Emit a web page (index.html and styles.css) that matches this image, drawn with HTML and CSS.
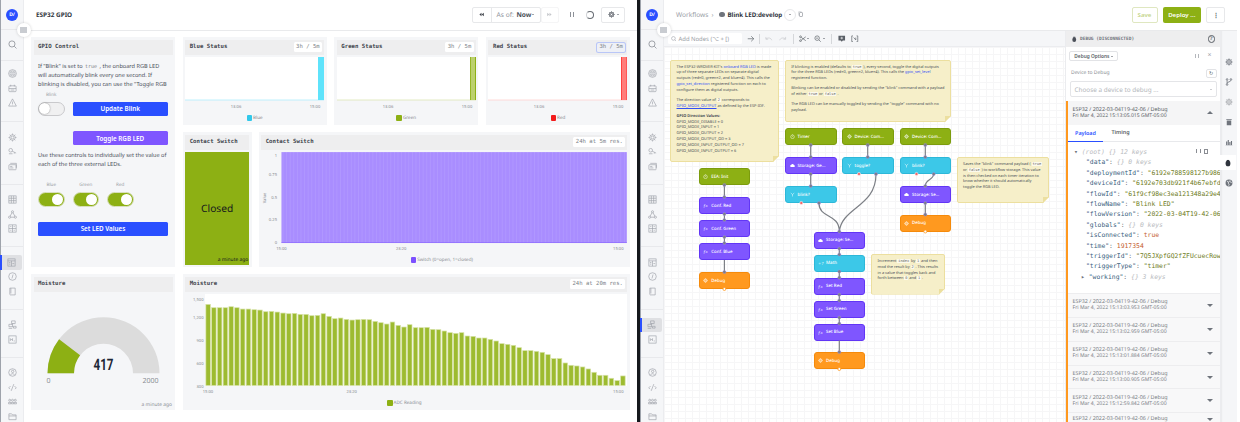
FILE: index.html
```html
<!DOCTYPE html>
<html lang="en">
<head>
    <meta charset="UTF-8">
    <title>ESP32 GPIO</title>
    <link rel="stylesheet" href="styles.css">
</head>
<body>
    <!-- shared icons -->
    <svg class="defs" width="0" height="0">
        <symbol id="i-search" viewBox="0 0 10 10"><circle cx="4.4" cy="4.4" r="3.4"/><path d="M7 7l2.4 2.4"/></symbol>
        <symbol id="i-list" viewBox="0 0 10 10"><circle cx="5" cy="5" r="4.3"/><circle cx="5" cy="5" r="2.8"/><path d="M3.4 4.2h3.2M3.4 5.8h3.2"/></symbol>
        <symbol id="i-device" viewBox="0 0 10 10"><rect x="1" y="2" width="8" height="6.5" rx="1"/><path d="M1 5h8M3 .8v2M7 .8v2M3 6.7h4"/></symbol>
        <symbol id="i-warn" viewBox="0 0 10 10"><path d="M5 1l4.3 8H.7zM5 4v2.6M5 7.4v.6"/></symbol>
        <symbol id="i-gear" viewBox="0 0 10 10"><circle cx="5" cy="5" r="3.1"/><circle cx="5" cy="5" r="1.6"/><path d="M5 .6v1.3M5 8.1v1.3M.6 5h1.3M8.1 5h1.3M1.9 1.9l.9.9M7.2 7.2l.9.9M8.1 1.9l-.9.9M2.8 7.2l-.9.9"/></symbol>
        <symbol id="i-key" viewBox="0 0 10 10"><circle cx="3" cy="3.6" r="2"/><path d="M4.6 4.6l4.4 2.2M7.4 6l-.5 1.4M1 7.5h4"/></symbol>
        <symbol id="i-card" viewBox="0 0 10 10"><rect x="1" y="3" width="8" height="5.6" rx=".6"/><path d="M2.5 1.5h6.8v5M2.4 5h2.4M2.4 6.6h3.6"/></symbol>
        <symbol id="i-table" viewBox="0 0 10 10"><rect x="1" y="1" width="8" height="8"/><path d="M1 3.6h8M1 6.3h8M3.7 1v8M6.3 1v8"/></symbol>
        <symbol id="i-tree" viewBox="0 0 10 10"><circle cx="5" cy="2" r="1.2"/><circle cx="1.8" cy="8" r="1.2"/><circle cx="8.2" cy="8" r="1.2"/><path d="M4.4 3l-2 3.9M5.6 3l2 3.9M3 8h4"/></symbol>
        <symbol id="i-qr" viewBox="0 0 10 10"><rect x="1" y="1" width="8" height="8"/><path d="M1 5h8M5 1v8M2.5 2.8h1.2M6.3 2.8h1.2M2.5 7h1.2M6.3 7h1.2"/></symbol>
        <symbol id="i-dash" viewBox="0 0 10 10"><rect x="1" y="1" width="8" height="8"/><path d="M1 3.2h8M5 3.2V9M2.2 5h1.6M2.2 6.8h1.6M6 6.2h2"/></symbol>
        <symbol id="i-info" viewBox="0 0 10 10"><circle cx="5" cy="5" r="4.2"/><path d="M5.6 2.8L4.4 7.2"/></symbol>
        <symbol id="i-book" viewBox="0 0 10 10"><path d="M2 1.2h6v7.6H2.6a.9.9 0 0 1-.6-.9zM3.2 1.2v6"/></symbol>
        <symbol id="i-flow" viewBox="0 0 10 10"><path d="M4 1h4v3H4zM1 4.8h4v2.6H1zM6 7h3v2H6zM6 4L4 4.8M5 7.2l1 .6M.7 9.3h4"/></symbol>
        <symbol id="i-chart" viewBox="0 0 10 10"><rect x="1" y="1" width="8" height="8"/><path d="M2.6 6.6V4l1.2 1.4L5 4v2.6M6.4 6.6h1.2"/></symbol>
        <symbol id="i-user" viewBox="0 0 10 10"><circle cx="5" cy="5" r="4.2"/><circle cx="5.2" cy="3.8" r="1.3"/><path d="M2.8 7.6c.3-1.6 4-1.8 4.4 0"/></symbol>
        <symbol id="i-code" viewBox="0 0 10 10"><path d="M6.5 1.2L3.5 8.8M2.8 3.4L.8 5.4l1.4 1.4M7.2 3.4l2 2-1.4 1.4"/></symbol>
        <symbol id="i-group" viewBox="0 0 10 10"><circle cx="1.9" cy="3.6" r="1.1"/><circle cx="5" cy="3.6" r="1.1"/><circle cx="8.1" cy="3.6" r="1.1"/><path d="M.6 7.6V6h2.6v1.6zM3.7 7.6V6h2.6v1.6zM6.8 7.6V6h2.6v1.6z"/></symbol>
        <symbol id="i-folder" viewBox="0 0 10 10"><path d="M1 2h3l1 1.2h4v5.3H1z"/><path d="M1 4.4h8"/></symbol>
        <symbol id="i-bug" viewBox="0 0 10 10"><ellipse class="solid" cx="5" cy="5.6" rx="3" ry="3.6"/><path class="solid" d="M3.4 1.2h3.2v1.6H3.4z"/></symbol>
        <symbol id="i-branch" viewBox="0 0 10 10"><circle cx="2.6" cy="1.8" r="1"/><circle cx="7.4" cy="1.8" r="1"/><circle cx="2.6" cy="8.2" r="1"/><path d="M2.6 2.8v4.4M7.4 2.8c0 2.4-4.8 1.6-4.8 4"/></symbol>
        <symbol id="i-trash" viewBox="0 0 10 10"><path class="solid" d="M2.2 3h5.6v6.2H2.2zM1.6 1.4h6.8v.9H1.6z"/></symbol>
        <symbol id="i-bars" viewBox="0 0 10 10"><path class="solid" d="M.8 8.6h8.4V9H.8zM1.4 4.4h1.4v4.2H1.4zM3.4 2.4h1.4v6.2H3.4zM5.4 5h1.4v3.6H5.4zM7.4 3.6h1.4v5H7.4z"/></symbol>
        <symbol id="i-globe" viewBox="0 0 10 10"><circle class="solid" cx="5" cy="5" r="4.3"/><path class="cut" d="M2.4 2.6l2 1-.4 1.6 1.2 1.2-.6 2M6.4 1.6l-.6 1.6 2.6 1.2"/></symbol>
        <symbol id="i-clock" viewBox="0 0 10 10"><circle cx="5" cy="5.6" r="3.6"/><path d="M5 5.6V3.8M5 .7v1"/></symbol>
        <symbol id="i-cloud" viewBox="0 0 10 10"><path class="solid" d="M2.6 8.2a2.2 2.2 0 0 1-.3-4.4 2.8 2.8 0 0 1 5.4.4 2 2 0 0 1-.2 4z"/></symbol>
        <symbol id="i-split" viewBox="0 0 10 10"><path d="M1.5 2l3.5 3 3.5-3M5 5v4"/></symbol>
        <symbol id="i-rewind" viewBox="0 0 10 10"><path class="solid" d="M5 1.5v7L.8 5zM9.6 1.5v7L5.4 5z"/></symbol>
        <symbol id="i-forward" viewBox="0 0 10 10"><path class="solid" d="M5 1.5v7L9.2 5zM.4 1.5v7L4.6 5z"/></symbol>
    </svg>

    <div class="screen">
        <!-- dashboard -->
        <div class="app app-left">
            <nav class="side">
                <div class="side-logo"><span class="logo">D/</span></div>
                <div class="side-sec side-sec-search"><span class="side-item"><svg class="ico ico-dark"><use href="#i-search"/></svg></span></div>
                <div class="side-sec side-sec-first">
                    <span class="side-item"><svg class="ico"><use href="#i-list"/></svg></span>
                    <span class="side-item"><svg class="ico"><use href="#i-device"/></svg></span>
                    <span class="side-item"><svg class="ico"><use href="#i-warn"/></svg></span>
                </div>
                <div class="side-sec">
                    <span class="side-item"><svg class="ico"><use href="#i-gear"/></svg></span>
                    <span class="side-item"><svg class="ico"><use href="#i-key"/></svg></span>
                    <span class="side-item"><svg class="ico"><use href="#i-card"/></svg></span>
                </div>
                <div class="side-sec">
                    <span class="side-item"><svg class="ico"><use href="#i-table"/></svg></span>
                    <span class="side-item"><svg class="ico"><use href="#i-tree"/></svg></span>
                    <span class="side-item"><svg class="ico"><use href="#i-qr"/></svg></span>
                </div>
                <div class="side-sec">
                    <span class="side-item active"><svg class="ico"><use href="#i-dash"/></svg></span>
                    <span class="side-item"><svg class="ico"><use href="#i-info"/></svg></span>
                    <span class="side-item"><svg class="ico"><use href="#i-book"/></svg></span>
                </div>
                <div class="side-sec">
                    <span class="side-item"><svg class="ico"><use href="#i-flow"/></svg></span>
                    <span class="side-item"><svg class="ico"><use href="#i-chart"/></svg></span>
                </div>
                <div class="side-sec side-sec-last">
                    <span class="side-item"><svg class="ico"><use href="#i-user"/></svg></span>
                    <span class="side-item"><svg class="ico"><use href="#i-code"/></svg></span>
                    <span class="side-item"><svg class="ico"><use href="#i-group"/></svg></span>
                    <span class="side-item"><svg class="ico"><use href="#i-folder"/></svg></span>
                </div>
                <button class="collapse"><i></i></button>
            </nav>

            <div class="main">
                <header class="topbar">
                    <div class="page-name">ESP32 GPIO</div>
                    <div class="time-controls">
                        <div class="btn-group">
                            <span class="tc-btn tc-back"><svg class="tc-arrow"><use href="#i-rewind"/></svg></span>
                            <span class="tc-btn tc-asof">As of: <b>Now</b> <i class="caret caret-dark"></i></span>
                        </div>
                        <span class="tc-next"><svg class="tc-arrow"><use href="#i-forward"/></svg></span>
                        <span class="tc-pause"></span>
                        <span class="tc-spin"></span>
                        <span class="tc-gear"><svg class="ico-gear"><use href="#i-gear"/></svg> <i class="caret caret-dark"></i></span>
                    </div>
                </header>

                <div class="dash">
                    <section class="panel gpio">
                        <div class="panel-title"><span>GPIO Control</span></div>
                        <div class="gpio-body">
                            <p class="gpio-intro">If "Blink" is set to <code>true</code> , the onboard RGB LED<br>will automatically blink every one second. If<br>blinking is disabled, you can use the "Toggle RGB</p>
                            <div class="blink-row">
                                <div class="switch-col">
                                    <label>Blink</label>
                                    <span class="switch switch-off"></span>
                                </div>
                                <button class="btn btn-blue btn-update">Update Blink</button>
                            </div>
                            <button class="btn btn-purple btn-toggle">Toggle RGB LED</button>
                            <p class="gpio-text">Use these controls to individually set the value of<br>each of the three external LEDs.</p>
                            <div class="led-row">
                                <div class="switch-col"><label>Blue</label><span class="switch"></span></div>
                                <div class="switch-col"><label>Green</label><span class="switch"></span></div>
                                <div class="switch-col"><label>Red</label><span class="switch"></span></div>
                            </div>
                            <button class="btn btn-blue btn-set">Set LED Values</button>
                        </div>
                    </section>

                    <section class="panel">
                        <div class="panel-title"><span>Blue Status</span><em class="pill">3h / 5m</em></div>
                        <svg class="chart status-chart" viewBox="0 0 139 54">
                            <rect width="139" height="43" fill="#fff"/>
                            <rect y="42.6" width="139" height=".8" fill="#aeeefc"/>
                            <rect x="133" width="6" height="43" fill="#5fe3fb"/>
                            <text x="51" y="51" text-anchor="middle">13:06</text>
                            <text x="130" y="51" text-anchor="middle">15:00</text>
                        </svg>
                        <div class="legend"><i class="sw sw-blue"></i>Blue</div>
                    </section>

                    <section class="panel">
                        <div class="panel-title"><span>Green Status</span><em class="pill">3h / 5m</em></div>
                        <svg class="chart status-chart" viewBox="0 0 139 54">
                            <rect width="139" height="43" fill="#fff"/>
                            <rect y="42.6" width="139" height=".8" fill="#dbe5b5"/>
                            <rect x="133" width="6" height="43" fill="#bcd06e"/>
                            <rect x="133" width=".8" height="43" fill="#8db014"/>
                            <rect x="138" width="1" height="43" fill="#8db014"/>
                            <text x="51" y="51" text-anchor="middle">13:06</text>
                            <text x="130" y="51" text-anchor="middle">15:00</text>
                        </svg>
                        <div class="legend"><i class="sw sw-green"></i>Green</div>
                    </section>

                    <section class="panel">
                        <div class="panel-title"><span>Red Status</span><em class="pill pill-focus">3h / 5m</em></div>
                        <svg class="chart status-chart" viewBox="0 0 139 54">
                            <rect width="139" height="43" fill="#fff"/>
                            <rect y="42.6" width="139" height=".8" fill="#ffd2d0"/>
                            <rect x="133" width="6" height="43" fill="#ff7d7a"/>
                            <rect x="133" width=".8" height="43" fill="#f33"/>
                            <rect x="138" width="1" height="43" fill="#f55"/>
                            <text x="51" y="51" text-anchor="middle">13:06</text>
                            <text x="130" y="51" text-anchor="middle">15:00</text>
                        </svg>
                        <div class="legend"><i class="sw sw-red"></i>Red</div>
                    </section>

                    <div class="contact-row">
                        <section class="panel">
                            <div class="panel-title"><span>Contact Switch</span></div>
                            <div class="closed">
                                <span class="closed-text">Closed</span>
                                <span class="closed-time">a minute ago</span>
                            </div>
                        </section>
                        <section class="panel">
                            <div class="panel-title"><span>Contact Switch</span><em class="pill">24h at 5m res.</em></div>
                            <svg class="chart contact-chart" viewBox="0 0 367 100">
                                <defs>
                                    <pattern id="stripes" width="3.6" height="10" patternUnits="userSpaceOnUse">
                                        <rect width="3.6" height="10" fill="#a98dff"/>
                                        <rect width=".7" height="10" fill="#b29aff"/>
                                    </pattern>
                                </defs>
                                <rect x="20.5" y="0" width="346" height="91" fill="url(#stripes)"/>
                                <rect x="20.5" y="90.4" width="346" height=".7" fill="#8a66ff"/>
                                <text x="16" y="5.2" text-anchor="end">1</text>
                                <text x="16" y="23.6" text-anchor="end">0.75</text>
                                <text x="16" y="46.6" text-anchor="end">0.5</text>
                                <text x="16" y="69.4" text-anchor="end">0.25</text>
                                <text x="16" y="92.4" text-anchor="end">0</text>
                                <text transform="translate(4.6 46) rotate(-90)" text-anchor="middle">Value</text>
                                <text x="20.5" y="98" text-anchor="middle">15:00</text>
                                <text x="140.5" y="98" text-anchor="middle">23:20</text>
                                <text x="358" y="98" text-anchor="middle">15:00</text>
                            </svg>
                            <div class="legend legend-low"><i class="sw sw-purple"></i>Switch (0=open, 1=closed)</div>
                        </section>
                    </div>

                    <section class="panel">
                        <div class="panel-title"><span>Moisture</span></div>
                        <svg class="chart gauge-chart" viewBox="0 0 139 115">
                            <path d="M13.5 79.3a56 56 0 0 1 112 0h-26.5a29.5 29.5 0 0 0-59 0z" fill="#dcdcdc"/>
                            <path d="M13.5 79.3a56 56 0 0 1 11.6-34.1l21 16a29.5 29.5 0 0 0-6.1 18.1z" fill="#8db014"/>
                            <text class="gauge-value" x="69.5" y="76" text-anchor="middle" textLength="20" lengthAdjust="spacingAndGlyphs">417</text>
                            <text class="gauge-end" x="14.5" y="89" text-anchor="middle">0</text>
                            <text class="gauge-end" x="116.5" y="89" text-anchor="middle">2000</text>
                            <text class="gauge-time" x="138" y="111.5" text-anchor="end">a minute ago</text>
                        </svg>
                    </section>

                    <section class="panel moisture">
                        <div class="panel-title"><span>Moisture</span><em class="pill">24h at 20m res.</em></div>
                        <svg class="chart moisture-chart" id="moistureChart" viewBox="0 0 443 101">
                            <rect x="20" width="423" height="92" fill="#fff"/>
                            <text x="18.5" y="7" text-anchor="end">1,500</text>
                            <text x="18.5" y="25" text-anchor="end">1,200</text>
                            <text x="18.5" y="48" text-anchor="end">900</text>
                            <text x="18.5" y="71" text-anchor="end">600</text>
                            <text x="18.5" y="94" text-anchor="end">300</text>
                            <text x="23" y="99.5" text-anchor="middle">15:00</text>
                            <text x="167" y="99.5" text-anchor="middle">23:20</text>
                            <text x="434" y="99.5" text-anchor="middle">15:00</text>
                        </svg>
                        <div class="legend legend-adc"><i class="sw sw-green"></i>ADC Reading</div>
                    </section>
                </div>
            </div>
        </div>

        <div class="divider"></div>

        <!-- workflow editor -->
        <div class="app app-right">
            <nav class="side">
                <div class="side-logo"><span class="logo">D/</span></div>
                <div class="side-sec side-sec-search"><span class="side-item"><svg class="ico ico-dark"><use href="#i-search"/></svg></span></div>
                <div class="side-sec side-sec-first">
                    <span class="side-item"><svg class="ico"><use href="#i-list"/></svg></span>
                    <span class="side-item"><svg class="ico"><use href="#i-device"/></svg></span>
                    <span class="side-item"><svg class="ico"><use href="#i-warn"/></svg></span>
                </div>
                <div class="side-sec">
                    <span class="side-item"><svg class="ico"><use href="#i-gear"/></svg></span>
                    <span class="side-item"><svg class="ico"><use href="#i-key"/></svg></span>
                    <span class="side-item"><svg class="ico"><use href="#i-card"/></svg></span>
                </div>
                <div class="side-sec">
                    <span class="side-item"><svg class="ico"><use href="#i-table"/></svg></span>
                    <span class="side-item"><svg class="ico"><use href="#i-tree"/></svg></span>
                    <span class="side-item"><svg class="ico"><use href="#i-qr"/></svg></span>
                </div>
                <div class="side-sec">
                    <span class="side-item"><svg class="ico"><use href="#i-dash"/></svg></span>
                    <span class="side-item"><svg class="ico"><use href="#i-info"/></svg></span>
                    <span class="side-item"><svg class="ico"><use href="#i-book"/></svg></span>
                </div>
                <div class="side-sec">
                    <span class="side-item active"><svg class="ico"><use href="#i-flow"/></svg></span>
                    <span class="side-item"><svg class="ico"><use href="#i-chart"/></svg></span>
                </div>
                <div class="side-sec side-sec-last">
                    <span class="side-item"><svg class="ico"><use href="#i-user"/></svg></span>
                    <span class="side-item"><svg class="ico"><use href="#i-code"/></svg></span>
                    <span class="side-item"><svg class="ico"><use href="#i-group"/></svg></span>
                    <span class="side-item"><svg class="ico"><use href="#i-folder"/></svg></span>
                </div>
                <button class="collapse"><i></i></button>
            </nav>

            <div class="main">
                <header class="topbar topbar-flow">
                    <div class="crumbs">
                        <span class="crumb-root">Workflows</span>
                        <span class="crumb-sep">›</span>
                        <span class="crumb-dot"></span>
                        <b class="crumb-name">Blink LED:develop</b>
                        <span class="crumb-more"><i class="caret caret-dark"></i></span>
                        <span class="crumb-copy"></span>
                    </div>
                    <div class="flow-actions">
                        <button class="act act-save">Save</button>
                        <button class="act act-deploy">Deploy ...</button>
                        <button class="act act-menu">⋮</button>
                    </div>
                </header>

                <div class="workspace">
                    <div class="editor">
                        <div class="toolbar">
                            <div class="add-nodes"><svg class="ico-small"><use href="#i-search"/></svg>Add Nodes (⌥ + [)</div>
                            <svg class="tool tool-arrow" viewBox="0 0 10 10"><path d="M1 5h8M5.6 1.6L9 5 5.6 8.4"/></svg>
                            <span class="tool-sep tool-sep-a"></span>
                            <svg class="tool tool-faded tool-undo" viewBox="0 0 10 10"><path d="M9 7C8 3.6 4 3 1.4 5.4M1.2 2.6v3h3"/></svg>
                            <svg class="tool tool-faded tool-redo" viewBox="0 0 10 10"><path d="M1 7C2 3.6 6 3 8.6 5.4M8.8 2.6v3h-3"/></svg>
                            <span class="tool-sep tool-sep-b"></span>
                            <svg class="tool tool-cut" viewBox="0 0 10 10"><circle cx="2" cy="2.4" r="1.2"/><circle cx="2" cy="7.6" r="1.2"/><path d="M3 3.2l6 4.4M3 6.8l6-4.4"/></svg><i class="caret caret-dark"></i>
                            <svg class="tool tool-zoom" viewBox="0 0 10 10"><circle cx="4.2" cy="4.2" r="3"/><path d="M6.4 6.4L9 9M2.8 4.2h2.8"/></svg><i class="caret caret-dark"></i>
                            <span class="tool-sep tool-sep-c"></span>
                            <svg class="tool tool-note" viewBox="0 0 10 10"><path class="solid" d="M.6 1h8.8v6.4H6.4l-1.4 1.6-1.4-1.6H.6z"/><path class="cut" d="M5 2.4v3.4M3.2 4.1h3.6"/></svg>
                            <svg class="tool tool-brackets" viewBox="0 0 10 10"><path d="M2.6 1.2H1v7.6h1.6M7.4 1.2H9v7.6H7.4M3.6 3.4l2.8 3.2M6.4 3.4v3.2"/></svg>
                        </div>

                        <div class="canvas">
                            <div class="note note-a">
                                <p>The ESP32-WROVER-KIT's <a>onboard RGB LED</a> is made<br>up of three separate LEDs on separate digital<br>outputs (red=0, green=2, and blue=4). This calls the<br><a>gpio_set_direction</a> registered function on each to<br>configure them as digital outputs.</p>
                                <p>The direction value of <code>2</code> corresponds to<br><a class="under">GPIO_MODE_OUTPUT</a> as defined by the ESP-IDF.</p>
                                <p><b>GPIO Direction Values:</b><br>GPIO_MODE_DISABLE = 0<br>GPIO_MODE_INPUT = 1<br>GPIO_MODE_OUTPUT = 2<br>GPIO_MODE_OUTPUT_OD = 3<br>GPIO_MODE_INPUT_OUTPUT_OD = 7<br>GPIO_MODE_INPUT_OUTPUT = 6</p>
                            </div>
                            <div class="note note-b">
                                <p>If blinking is enabled (defaults to <code>true</code> ), every second, toggle the digital outputs<br>for the three RGB LEDs (red=0, green=2, blue=4). This calls the <a>gpio_set_level</a><br>registered function.</p>
                                <p>Blinking can be enabled or disabled by sending the "blink" command with a payload<br>of either <code>true</code> or <code>false</code> .</p>
                                <p>The RGB LED can be manually toggled by sending the "toggle" command with no<br>payload.</p>
                            </div>
                            <div class="note note-c">
                                <p>Increment <code>index</code> by <code>1</code> and then<br>mod the result by <code>2</code> . This results<br>in a value that toggles back and<br>forth between <code>0</code> and <code>1</code> .</p>
                            </div>
                            <div class="note note-d">
                                <p>Saves the "blink" command payload ( <code>true</code><br>or <code>false</code> ) to workflow storage. This value<br>is then checked on each timer iteration to<br>know whether it should automatically<br>toggle the RGB LED.</p>
                            </div>

                            <div class="node node-green col-a y121"><svg class="nico"><use href="#i-clock"/></svg>EEA: Init</div>
                            <div class="node node-purple col-a y150"><i class="fx">ƒx</i>Conf. Red</div>
                            <div class="node node-purple col-a y173"><i class="fx">ƒx</i>Conf. Green</div>
                            <div class="node node-purple col-a y196"><i class="fx">ƒx</i>Conf. Blue</div>
                            <div class="node node-orange col-a y225"><svg class="nico"><use href="#i-gear"/></svg>Debug</div>

                            <div class="node node-green col-b y81"><svg class="nico"><use href="#i-clock"/></svg>Timer</div>
                            <div class="node node-purple col-b y110"><svg class="nico"><use href="#i-cloud"/></svg>Storage: Ge...</div>
                            <div class="node node-cyan col-b y139"><svg class="nico"><use href="#i-split"/></svg>blink?</div>

                            <div class="node node-green col-c y81"><svg class="nico"><use href="#i-gear"/></svg>Device: Com...</div>
                            <div class="node node-cyan col-c y110"><svg class="nico"><use href="#i-split"/></svg>toggle?</div>

                            <div class="node node-green col-d y81"><svg class="nico"><use href="#i-gear"/></svg>Device: Com...</div>
                            <div class="node node-cyan col-d y110"><svg class="nico"><use href="#i-split"/></svg>blink?</div>
                            <div class="node node-purple col-d y139"><svg class="nico"><use href="#i-cloud"/></svg>Storage: Se...</div>
                            <div class="node node-orange col-d y167"><svg class="nico"><use href="#i-gear"/></svg>Debug</div>

                            <div class="node node-purple col-e y184"><svg class="nico"><use href="#i-cloud"/></svg>Storage: Se...</div>
                            <div class="node node-cyan col-e y207"><i class="fx">+?</i>Math</div>
                            <div class="node node-purple col-e y230"><i class="fx">ƒx</i>Set Red</div>
                            <div class="node node-purple col-e y253"><i class="fx">ƒx</i>Set Green</div>
                            <div class="node node-purple col-e y276"><i class="fx">ƒx</i>Set Blue</div>
                            <div class="node node-orange col-e y305"><svg class="nico"><use href="#i-gear"/></svg>Debug</div>

                            <svg class="wires" viewBox="0 0 401 376">
                                <path d="M146.7 98V110M146.7 127V139M203.7 98V110M261.3 98V110M261.3 156V167.5M60.4 138V150M60.4 167V173M60.4 190V196M60.4 213V225M175.3 201.5V207.5M175.3 224.5V230.7M175.3 247.7V253.5M175.3 270.5V276.5M175.3 293.5V305"/>
                                <path d="M155 156C155 172 175.3 166 175.3 184.5M212 127C212 160 178 160 175.3 184.5M269.7 127C269.7 133 261.3 132 261.3 139"/>
                                <g class="port">
                                    <circle cx="146.7" cy="98" r="1.6"/><circle cx="146.7" cy="110" r="1.6"/><circle cx="146.7" cy="127" r="1.6"/><circle cx="146.7" cy="139" r="1.6"/>
                                    <circle cx="203.7" cy="98" r="1.6"/><circle cx="203.7" cy="110" r="1.6"/><circle cx="261.3" cy="98" r="1.6"/><circle cx="261.3" cy="110" r="1.6"/>
                                    <circle cx="261.3" cy="139" r="1.6"/><circle cx="261.3" cy="156" r="1.6"/><circle cx="261.3" cy="167.5" r="1.6"/>
                                    <circle cx="60.4" cy="138" r="1.6"/><circle cx="60.4" cy="150" r="1.6"/><circle cx="60.4" cy="167" r="1.6"/><circle cx="60.4" cy="173" r="1.6"/><circle cx="60.4" cy="190" r="1.6"/><circle cx="60.4" cy="196" r="1.6"/><circle cx="60.4" cy="225" r="1.6"/>
                                    <circle cx="175.3" cy="184.5" r="1.6"/><circle cx="175.3" cy="201.5" r="1.6"/><circle cx="175.3" cy="207.5" r="1.6"/><circle cx="175.3" cy="224.5" r="1.6"/><circle cx="175.3" cy="230.7" r="1.6"/><circle cx="175.3" cy="247.7" r="1.6"/><circle cx="175.3" cy="253.5" r="1.6"/><circle cx="175.3" cy="270.5" r="1.6"/><circle cx="175.3" cy="276.5" r="1.6"/><circle cx="175.3" cy="305" r="1.6"/>
                                    <circle cx="155" cy="156" r="1.6"/><circle cx="212" cy="127" r="1.6"/><circle cx="269.7" cy="127" r="1.6"/>
                                </g>
                                <g class="port port-true">
                                    <circle cx="137.3" cy="156" r="1.6"/><circle cx="195" cy="127" r="1.6"/><circle cx="252.5" cy="127" r="1.6"/>
                                </g>
                                <g class="port port-end">
                                    <circle cx="60.4" cy="242" r="1.5"/><circle cx="175.3" cy="322" r="1.5"/><circle cx="261.3" cy="184.5" r="1.5"/>
                                </g>
                            </svg>
                        </div>
                    </div>

                    <aside class="debug">
                        <div class="debug-head">
                            <svg class="debug-bug"><use href="#i-bug"/></svg>
                            <span>DEBUG (DISCONNECTED)</span>
                            <i class="help">?</i>
                        </div>
                        <div class="debug-opts">
                            <button class="opt-btn">Debug Options <i class="caret caret-dark"></i></button>
                            <span class="opt-pause"></span>
                            <span class="opt-close">×</span>
                        </div>
                        <div class="device-row">
                            <span>Device to Debug</span>
                            <button class="refresh">↻</button>
                        </div>
                        <div class="device-select">Choose a device to debug ...<i class="caret"></i></div>

                        <div class="entries">
                            <div class="entry entry-open">
                                <div class="entry-text"><span>ESP32 / 2022-03-04T19-42-06 / Debug</span><small>Fri Mar 4, 2022 15:13:05.015 GMT-05:00</small></div>
                                <i class="entry-up"></i>
                            </div>
                            <div class="tabs"><span class="tab tab-on">Payload</span><span class="tab">Timing</span></div>
                            <div class="json">
                                <div class="j-tools"><span class="j-tool-a"></span><span class="j-tool-b"></span></div>
                                <div class="j-root">▾ <em>(root) {} 12 keys</em></div>
                                <div><b>"data"</b>: <em>{} 0 keys</em></div>
                                <div><b>"deploymentId"</b>: <s>"6192e788598127b986</s></div>
                                <div><b>"deviceId"</b>: <s>"6192e703db921f4b67ebfd</s></div>
                                <div><b>"flowId"</b>: <s>"61f9cf98ec3ea121348a29e4</s></div>
                                <div><b>"flowName"</b>: <s>"Blink LED"</s></div>
                                <div><b>"flowVersion"</b>: <s>"2022-03-04T19-42-06</s></div>
                                <div><b>"globals"</b>: <em>{} 0 keys</em></div>
                                <div><b>"isConnected"</b>: <u>true</u></div>
                                <div><b>"time"</b>: <u>1917354</u></div>
                                <div><b>"triggerId"</b>: <s>"7Q5JXpfGQ2fZFUcuecRow</s></div>
                                <div><b>"triggerType"</b>: <s>"timer"</s></div>
                                <div class="j-sub">▸ <b>"working"</b>: <em>{} 3 keys</em></div>
                            </div>
                            <div class="entry">
                                <div class="entry-text"><span>ESP32 / 2022-03-04T19-42-06 / Debug</span><small>Fri Mar 4, 2022 15:13:03.953 GMT-05:00</small></div>
                                <i class="entry-down"></i>
                            </div>
                            <div class="entry">
                                <div class="entry-text"><span>ESP32 / 2022-03-04T19-42-06 / Debug</span><small>Fri Mar 4, 2022 15:13:02.959 GMT-05:00</small></div>
                                <i class="entry-down"></i>
                            </div>
                            <div class="entry">
                                <div class="entry-text"><span>ESP32 / 2022-03-04T19-42-06 / Debug</span><small>Fri Mar 4, 2022 15:13:01.884 GMT-05:00</small></div>
                                <i class="entry-down"></i>
                            </div>
                            <div class="entry">
                                <div class="entry-text"><span>ESP32 / 2022-03-04T19-42-06 / Debug</span><small>Fri Mar 4, 2022 15:13:00.905 GMT-05:00</small></div>
                                <i class="entry-down"></i>
                            </div>
                            <div class="entry">
                                <div class="entry-text"><span>ESP32 / 2022-03-04T19-42-06 / Debug</span><small>Fri Mar 4, 2022 15:12:59.842 GMT-05:00</small></div>
                                <i class="entry-down"></i>
                            </div>
                            <div class="entry entry-last">
                                <div class="entry-text"><span>ESP32 / 2022-03-04T19-42-06 / Debug</span></div>
                                <i class="entry-down"></i>
                            </div>
                        </div>
                    </aside>

                    <div class="rail">
                        <span class="rail-item"><svg><use href="#i-gear"/></svg></span>
                        <span class="rail-item"><svg><use href="#i-branch"/></svg></span>
                        <span class="rail-item rail-faded"><svg><use href="#i-gear"/></svg></span>
                        <span class="rail-item"><svg><use href="#i-trash"/></svg></span>
                        <span class="rail-item"><svg><use href="#i-bars"/></svg></span>
                        <span class="rail-item rail-on"><svg><use href="#i-bug"/></svg></span>
                        <span class="rail-item"><svg><use href="#i-globe"/></svg></span>
                    </div>
                </div>
            </div>
        </div>
    </div>
    <script src="script.js"></script>
</body>
</html>
```

FILE: styles.css
```css
* {
    box-sizing: border-box;
}
html, body {
    margin: 0;
    height: 422px;
    overflow: hidden;
    background: #fff;
}
body {
    font-family: "Noto Sans", sans-serif;
    font-size: 5.4px;
    color: #4a4f58;
    text-rendering: geometricPrecision;
}
button {
    font-family: inherit;
    border: none;
    padding: 0;
}
.defs {
    position: absolute;
}
.solid {
    fill: currentColor;
    stroke: none;
}
.cut {
    stroke: #f5f6f8;
    fill: none;
}

.screen {
    display: flex;
    width: 1237px;
    height: 422px;
}
.app {
    display: flex;
    height: 422px;
    overflow: hidden;
}
.app-left {
    width: 637px;
}
.app-right {
    width: 597px;
}
.divider {
    width: 3px;
    background: #15181d;
}
.main {
    flex: 1;
    min-width: 0;
    display: flex;
    flex-direction: column;
}

/* left nav */
.side {
    position: relative;
    width: 24px;
    flex: none;
    background: #f5f6f8;
    border-left: 1px solid #9ea3ab;
    border-right: 1px solid #ebecef;
}
.side-logo {
    height: 30px;
    display: flex;
    align-items: center;
    justify-content: center;
    border-bottom: 1px solid #e8e9ec;
}
.logo {
    width: 12px;
    height: 12px;
    border-radius: 50%;
    background: #2a4fff;
    color: #fff;
    font-size: 5px;
    font-weight: 700;
    line-height: 12px;
    text-align: center;
}
.side-sec {
    display: flex;
    flex-direction: column;
    padding: 8px 0 10px;
    border-bottom: 1px solid #e8e9ec;
}
.side-sec-search {
    padding: 7px 0 9px;
    height: 31px;
}
.side-sec-first {
    padding: 5.5px 0 11px;
}
.side-sec-last {
    border-bottom: none;
    padding-top: 8px;
}
.side-item {
    height: 14.5px;
    display: flex;
    align-items: center;
    justify-content: center;
    position: relative;
}
.side-item.active {
    background: #dfe0e3;
    border-radius: 0 2px 2px 0;
    margin-right: 1px;
}
.side-item.active::before {
    content: "";
    position: absolute;
    left: -1px;
    top: 0;
    bottom: 0;
    width: 2px;
    background: #2a4fff;
}
.ico {
    width: 9px;
    height: 9px;
    fill: none;
    stroke: #9a9ea6;
    stroke-width: .7;
    color: #9a9ea6;
}
.ico-dark {
    stroke: #6f747c;
}
.collapse {
    position: absolute;
    top: 23px;
    left: 15.5px;
    width: 14px;
    height: 14px;
    border-radius: 50%;
    background: #fff;
    box-shadow: 0 0 3px rgba(0, 0, 0, .18);
    display: flex;
    align-items: center;
    justify-content: center;
    z-index: 5;
}
.collapse i {
    width: 7px;
    height: 6px;
    background: #c9ccd1;
}

/* top bars */
.topbar {
    height: 31px;
    flex: none;
    display: flex;
    align-items: center;
    justify-content: space-between;
    border-bottom: 1px solid #e9eaec;
    padding: 0 12px 1px 12px;
}
.page-name {
    font-size: 6.4px;
    font-weight: 700;
    color: #30353d;
}
.caret {
    display: inline-block;
    border: 1.4px solid transparent;
    border-top: 1.8px solid #9a9ea6;
    border-bottom: 0;
    vertical-align: middle;
}
.caret-dark {
    border-top-color: #4a4f58;
}
.time-controls {
    display: flex;
    align-items: center;
}
.btn-group {
    display: flex;
    height: 16px;
    border: 1px solid #e7e8ea;
    border-radius: 2px;
}
.tc-btn {
    display: flex;
    align-items: center;
    justify-content: center;
    gap: 1px;
    font-size: 6.6px;
    color: #8d9198;
}
.tc-back {
    width: 19px;
    border-right: 1px solid #e7e8ea;
    color: #40444c;
}
.tc-arrow {
    width: 5px;
    height: 5px;
}
.tc-asof {
    width: 48px;
    white-space: pre;
}
.tc-asof b {
    color: #4a4f58;
}
.tc-next {
    width: 18px;
    height: 16px;
    border: 1px solid #f5f5f6;
    border-radius: 2px;
    color: #c4c6ca;
    display: flex;
    align-items: center;
    justify-content: center;
}
.tc-pause {
    width: 4px;
    height: 5px;
    margin-left: 11px;
    border-left: 1.2px solid #8d9198;
    border-right: 1.2px solid #8d9198;
}
.tc-spin {
    width: 8px;
    height: 8px;
    margin-left: 12.5px;
    border-radius: 50%;
    border: 1px solid #666b72;
    border-left-color: #d0d2d6;
}
.tc-gear {
    width: 24px;
    height: 16px;
    margin-left: 7px;
    border: 1px solid #e7e8ea;
    border-radius: 2px;
    display: flex;
    align-items: center;
    justify-content: center;
    gap: 2px;
    color: #4a4f58;
}
.ico-gear {
    width: 7px;
    height: 7px;
    fill: none;
    stroke: #4a4f58;
    stroke-width: 1.1;
}

/* dashboard grid */
.dash {
    display: grid;
    grid-template-columns: repeat(4, 144px);
    grid-template-rows: 88px 135px 136px;
    gap: 7px 7.67px;
    padding: 6px 7px;
}
.panel {
    background: #f5f6f8;
    padding: 3px 2.5px;
    min-width: 0;
    overflow: hidden;
}
.gpio {
    grid-row: span 2;
}
.contact-row {
    grid-column: span 3;
    display: grid;
    grid-template-columns: 69px 1fr;
    gap: 7px;
}
.moisture {
    grid-column: span 3;
}
.panel-title {
    height: 15px;
    background: #eeeeef;
    display: flex;
    align-items: center;
    justify-content: space-between;
    padding: 0 2px 1px 4.5px;
    font-family: "DejaVu Sans Mono", monospace;
    font-size: 5.7px;
    font-weight: 700;
    color: #40444c;
}
.pill {
    font-style: normal;
    font-weight: 400;
    font-size: 5.6px;
    height: 10px;
    line-height: 10px;
    padding: 0 2.5px;
    background: #fff;
    border-radius: 1.5px;
    color: #7b7f86;
    white-space: nowrap;
}
.pill-focus {
    box-shadow: 0 0 0 1px #b9c6f7;
    background: #eef0f6;
    height: 9px;
    line-height: 9px;
}
.chart {
    display: block;
    width: 100%;
    margin-top: 2px;
}
.chart text {
    font-family: "Noto Sans", sans-serif;
    font-size: 4.1px;
    fill: #8a8d93;
}
.status-chart {
    height: 54px;
}
.contact-chart {
    height: 100px;
}
.gauge-chart {
    height: 115px;
}
.moisture-chart {
    height: 101px;
}
.legend {
    display: flex;
    align-items: center;
    justify-content: center;
    gap: 1px;
    margin-top: 4px;
    font-size: 4.6px;
    color: #8a8d93;
}
.legend-low {
    margin-top: 5px;
    padding-right: 5px;
}
.legend-adc {
    margin-top: 5px;
    padding-right: 4px;
}
.sw {
    width: 5.5px;
    height: 5.5px;
    border-radius: 1px;
}
.sw-blue {
    background: #32c8ea;
}
.sw-green {
    background: #8db014;
}
.sw-red {
    background: #f21b1b;
}
.sw-purple {
    background: #7c50ff;
}

/* gpio panel */
.gpio-body {
    padding: 0 4.5px;
    font-size: 5.6px;
    color: #4a4f58;
}
.gpio-intro {
    margin: 7px 0 0;
    height: 24.9px;
    line-height: 8.3px;
    white-space: nowrap;
}
.gpio-intro code {
    font-family: "DejaVu Sans Mono", monospace;
    font-size: 5px;
    color: #7b7f86;
    padding: 0 1px;
}
.blink-row {
    display: flex;
    align-items: flex-end;
    margin-top: 5px;
}
.switch-col {
    width: 26.5px;
    display: flex;
    flex-direction: column;
    align-items: center;
}
.switch-col label {
    font-size: 4.6px;
    color: #9a9ea6;
    height: 7px;
    line-height: 7px;
    margin-bottom: 3px;
}
.switch {
    width: 26.5px;
    height: 15px;
    border-radius: 8px;
    background: #8db014;
    border: 1px solid #d8dfbd;
    position: relative;
}
.switch::after {
    content: "";
    position: absolute;
    right: 1px;
    top: 1px;
    width: 11px;
    height: 11px;
    border-radius: 50%;
    background: #fff;
}
.switch-off {
    height: 14px;
    background: #f0f0f1;
    border-color: #c9c9cc;
}
.switch-off::after {
    right: auto;
    left: 0;
    top: .5px;
    box-shadow: 0 0 1.5px rgba(0, 0, 0, .5);
}
.btn {
    display: block;
    height: 14px;
    border-radius: 1.5px;
    color: #fff;
    font-size: 6.3px;
    font-weight: 600;
}
.btn-blue {
    background: #2a4fff;
}
.btn-purple {
    background: #7f56ff;
}
.btn-update {
    width: 95.5px;
    margin-left: 8px;
}
.btn-toggle {
    width: 95.5px;
    margin: 15.5px 0 0 34.5px;
}
.btn-set {
    width: 130px;
    margin-top: 15px;
}
.gpio-text {
    margin: 6px 0 0;
    line-height: 8.6px;
    white-space: nowrap;
}
.led-row {
    display: flex;
    gap: 8px;
    margin-top: 13.5px;
}
.led-row label {
    margin-bottom: 2.5px;
}

/* contact switch */
.closed {
    position: relative;
    height: 113px;
    margin-top: 2px;
    background: #8db014;
    color: #15181d;
    display: flex;
    align-items: center;
    justify-content: center;
}
.closed-text {
    font-size: 10.2px;
    line-height: 11px;
}
.closed-time {
    position: absolute;
    right: 1px;
    bottom: 2px;
    font-size: 4.9px;
}

.gauge-value {
    font-family: "Roboto", sans-serif !important;
    font-weight: 700;
    font-size: 16px !important;
    fill: #1d2735 !important;
}
.gauge-end {
    font-size: 7px !important;
    fill: #8a8d93;
}
.gauge-time {
    font-size: 4.9px !important;
}
.bar {
    fill: #9dbb30;
    stroke: #d6e2a6;
    stroke-width: .7;
}

/* workflow header */
.topbar-flow {
    padding: 0 12px 1px 12px;
}
.crumbs {
    display: flex;
    align-items: center;
    font-size: 6.6px;
}
.crumb-root {
    color: #9a9ea6;
}
.crumb-sep {
    margin: 0 6px 0 3px;
    color: #9a9ea6;
}
.crumb-dot {
    width: 5.5px;
    height: 5.5px;
    border-radius: 50%;
    background: #6f747c;
    margin-right: 2.5px;
}
.crumb-name {
    color: #30353d;
    font-size: 6.2px;
}
.crumb-more {
    width: 12px;
    height: 12px;
    margin-left: 2px;
    border: 1px solid #e7e8ea;
    border-radius: 50%;
    display: flex;
    align-items: center;
    justify-content: center;
}
.crumb-copy {
    width: 4.5px;
    height: 5.5px;
    margin-left: 2.5px;
    border: .7px solid #b4b7bc;
    border-radius: 1px;
    box-shadow: -1px -1px 0 -.2px #d5d7da;
}
.flow-actions {
    display: flex;
    gap: 5px;
}
.act {
    height: 16px;
    border-radius: 2px;
    font-size: 6.1px;
    font-weight: 600;
}
.act-save {
    width: 26px;
    background: #fff;
    border: 1px solid #dfe7c0;
    color: #c3d488;
}
.act-deploy {
    width: 38.5px;
    background: #8db014;
    color: #fff;
}
.act-menu {
    width: 19px;
    background: #fff;
    border: 1px solid #e7e8ea;
    color: #5a5f66;
}

/* editor */
.workspace {
    flex: 1;
    display: flex;
    min-height: 0;
}
.editor {
    width: 401px;
    flex: none;
    display: flex;
    flex-direction: column;
}
.toolbar {
    position: relative;
    height: 16px;
    flex: none;
    background: #f5f6f8;
    border-bottom: 1px solid #ebecef;
    display: flex;
    align-items: center;
    padding-left: 4px;
}
.add-nodes {
    width: 74px;
    height: 11px;
    background: #fff;
    border-radius: 1.5px;
    display: flex;
    align-items: center;
    padding-left: 3px;
    gap: 2px;
    color: #9a9ea6;
    font-size: 5.9px;
}
.ico-small {
    width: 5.5px;
    height: 5.5px;
    fill: none;
    stroke: #9a9ea6;
    stroke-width: 1;
}
.tool {
    width: 7.5px;
    height: 7.5px;
    fill: none;
    stroke: #5a5f66;
    stroke-width: .9;
    flex: none;
    color: #5a5f66;
}
.tool-faded {
    stroke: #c6c8cc;
}
.tool-arrow {
    margin-left: 4.5px;
}
.tool-undo {
    margin-left: 5px;
}
.tool-redo {
    margin-left: 6.5px;
}
.tool-cut {
    margin-left: 5px;
}
.tool-zoom {
    margin-left: 5px;
}
.tool-note {
    margin-left: 6.5px;
}
.tool-brackets {
    margin-left: 5.5px;
}
.toolbar .caret {
    margin-left: 1px;
}
.tool-sep {
    width: 1px;
    height: 10px;
    background: #d5d7da;
    flex: none;
}
.tool-sep-a {
    margin-left: 5px;
}
.tool-sep-b {
    margin-left: 6px;
}
.tool-sep-c {
    margin-left: 6px;
}
.canvas {
    position: relative;
    flex: 1;
    overflow: hidden;
    background-color: #fff;
    background-image:
        linear-gradient(#f6f6f7 1px, transparent 1px),
        linear-gradient(90deg, #f6f6f7 1px, transparent 1px);
    background-size: 7px 7px;
}
.note {
    position: absolute;
    background: #f6efc9;
    border: 1px solid #ecdf9f;
    border-radius: 2px;
    color: #4a4f58;
    font-size: 3.9px;
    line-height: 5.8px;
    white-space: nowrap;
    clip-path: polygon(0 0, 100% 0, 100% calc(100% - 6px), calc(100% - 6px) 100%, 0 100%);
}
.note::after {
    content: "";
    position: absolute;
    right: -1px;
    bottom: -1px;
    width: 6px;
    height: 6px;
    background: #ecdf9f;
}
.note p {
    margin: 0 0 4.4px;
}
.note a {
    color: #3350f5;
}
.note a.under {
    text-decoration: underline;
}
.note code {
    font-family: "DejaVu Sans Mono", monospace;
    font-size: 3.6px;
    background: #fbf9ec;
    color: #666;
    padding: 0 .8px;
}
.note-a {
    left: 6px;
    top: 12.5px;
    width: 109px;
    height: 102.5px;
    padding: 4px 5.5px;
}
.note-b {
    left: 120.7px;
    top: 12.5px;
    width: 166.3px;
    height: 62.5px;
    padding: 4px 5.5px;
}
.note-c {
    left: 207px;
    top: 207px;
    width: 74px;
    height: 40.5px;
    padding: 4px 5.5px;
}
.note-d {
    left: 293px;
    top: 110px;
    width: 92px;
    height: 46px;
    padding: 4px 5px;
}
.node {
    position: absolute;
    width: 51.5px;
    height: 17px;
    border-radius: 3px;
    border: 1px solid;
    color: #fff;
    font-size: 4.4px;
    font-weight: 500;
    display: flex;
    align-items: center;
    padding-left: 3.5px;
    white-space: nowrap;
}
.node-green {
    background: #8db014;
    border-color: #7c9c0d;
}
.node-purple {
    background: #7f56ff;
    border-color: #6236f5;
}
.node-cyan {
    background: #3cc8e8;
    border-color: #2db7d8;
}
.node-orange {
    background: #ff991f;
    border-color: #f58a0b;
}
.nico {
    width: 5px;
    height: 5px;
    margin-right: 3px;
    flex: none;
    fill: none;
    stroke: #fff;
    stroke-width: 1;
    color: #fff;
}
.fx {
    width: 5px;
    margin-right: 3px;
    font-size: 4.6px;
    font-family: "Liberation Serif", serif;
}
.col-a { left: 34.7px; }
.col-b { left: 121px; }
.col-c { left: 178px; }
.col-d { left: 235.6px; }
.col-e { left: 149.6px; }
.y81 { top: 81px; }
.y110 { top: 110px; }
.y121 { top: 121px; }
.y139 { top: 139px; }
.y150 { top: 150px; }
.y167 { top: 167.5px; }
.y173 { top: 173px; }
.y184 { top: 184.5px; }
.y196 { top: 196px; }
.y207 { top: 207.5px; }
.y225 { top: 225px; }
.y230 { top: 230.7px; }
.y253 { top: 253.5px; }
.y276 { top: 276.5px; }
.y305 { top: 305px; }
.wires {
    position: absolute;
    left: 0;
    top: 0;
    width: 401px;
    height: 376px;
    fill: none;
    stroke: #7d8086;
    stroke-width: 1.2;
}
.port circle {
    fill: #7d8086;
    stroke: #a08cf0;
    stroke-width: .4;
}
.port-true circle {
    fill: #f2696b;
    stroke: #fff;
    stroke-width: .5;
}
.port-end circle {
    fill: #fff;
    stroke: #ff991f;
    stroke-width: .8;
}

/* debug panel */
.debug {
    width: 155px;
    flex: none;
    display: flex;
    flex-direction: column;
    border-left: 1px solid #ebecef;
    font-size: 5.2px;
    color: #6f747c;
    background: #fff;
    overflow: hidden;
}
.debug-head {
    height: 16px;
    flex: none;
    background: #eeeeef;
    display: flex;
    align-items: center;
    padding: 0 5px 0 5px;
    font-family: "DejaVu Sans Mono", monospace;
    font-size: 4.5px;
    font-weight: 700;
    color: #6f747c;
}
.debug-head span {
    flex: 1;
}
.debug-bug {
    width: 6.5px;
    height: 6.5px;
    margin-right: 2.5px;
    fill: none;
    stroke: #4a4f58;
    stroke-width: 1;
    color: #4a4f58;
}
.help {
    width: 7.5px;
    height: 7.5px;
    border: .8px solid #5a5f66;
    border-radius: 50%;
    font-style: normal;
    font-family: "Noto Sans", sans-serif;
    font-size: 5px;
    line-height: 6px;
    text-align: center;
    color: #5a5f66;
}
.debug-opts {
    display: flex;
    align-items: center;
    margin: 4px 0 0 3px;
    height: 10px;
    flex: none;
}
.opt-btn {
    width: 49px;
    height: 10px;
    background: #fff;
    border: 1px solid #e2e3e6;
    border-radius: 2px;
    font-size: 4.8px;
    font-weight: 600;
    color: #5a5f66;
}
.opt-pause {
    width: 3.5px;
    height: 4px;
    margin-left: 77px;
    border-left: 1px solid #b4b7bc;
    border-right: 1px solid #b4b7bc;
}
.opt-close {
    margin-left: 9px;
    font-size: 7px;
    line-height: 8px;
    color: #9a9ea6;
}
.device-row {
    display: flex;
    align-items: center;
    justify-content: space-between;
    margin: 7px 3.5px 0 5px;
    height: 10px;
    flex: none;
    color: #8a8d93;
    font-size: 5px;
}
.refresh {
    width: 11px;
    height: 9px;
    background: #fff;
    border: 1px solid #e2e3e6;
    border-radius: 2px;
    font-size: 5px;
    line-height: 6px;
    color: #5a5f66;
}
.device-select {
    flex: none;
    display: flex;
    align-items: center;
    justify-content: space-between;
    height: 16px;
    margin: 3px 3.5px 0 3.5px;
    padding: 0 4px 0 4px;
    border: 1px solid #e4e5e8;
    border-radius: 2px;
    color: #b4b7bc;
    font-size: 6.4px;
}
.entries {
    margin-top: 4px;
    border-left: 2px solid #ff991f;
    flex: none;
}
.entry {
    height: 23.9px;
    display: flex;
    align-items: center;
    justify-content: space-between;
    padding: 0 7px 0 4.5px;
    background: #f8f8f9;
    border-bottom: 1px solid #ededef;
}
.entry-open {
    background: #f5f5f6;
    border-bottom: none;
}
.entry-last {
    height: 10px;
    align-items: flex-start;
    border-bottom: none;
}
.entry-last .entry-text {
    margin-top: 2px;
}
.entry-last .entry-down {
    margin-top: 5px;
}
.entry-text {
    display: flex;
    flex-direction: column;
    line-height: 7.3px;
    font-size: 5.4px;
    white-space: nowrap;
    color: #7b7f86;
}
.entry-text small {
    font-size: 5.1px;
}
.entry-open .entry-text {
    color: #5a5f66;
}
.entry-down {
    border: 3.5px solid transparent;
    border-top: 3px solid #6f747c;
    border-bottom: 0;
}
.entry-up {
    border: 3.5px solid transparent;
    border-bottom: 3px solid #6f747c;
    border-top: 0;
}
.tabs {
    height: 17px;
    display: flex;
    align-items: flex-end;
    border-bottom: 1px solid #e8e9ec;
    font-size: 5.4px;
    font-weight: 600;
    color: #5a5f66;
}
.tab {
    width: 35px;
    height: 16px;
    line-height: 14px;
    text-align: center;
}
.tab-on {
    color: #2a4fff;
    border-bottom: 1px solid #2a4fff;
    margin-bottom: -1px;
}
.json {
    position: relative;
    height: 152px;
    padding: 5px 0 0 18px;
    font-family: "DejaVu Sans Mono", monospace;
    font-size: 6.4px;
    line-height: 10.4px;
    white-space: nowrap;
    background: #fff;
    border-bottom: 1px solid #ededef;
}
.json b {
    font-weight: 400;
    color: #3b5f80;
}
.json em {
    color: #b8babe;
}
.json s {
    text-decoration: none;
    color: #6e7b1a;
}
.json u {
    text-decoration: none;
    color: #c4602f;
}
.j-root {
    margin-left: -12px;
}
.j-sub {
    margin-left: -5px;
}
.j-tools {
    position: absolute;
    top: 7px;
    right: 12px;
    display: flex;
    gap: 3px;
}
.j-tool-a {
    width: 5px;
    height: 4.5px;
    border-left: 1px solid #8a8d93;
    border-right: 1px solid #8a8d93;
}
.j-tool-b {
    width: 4px;
    height: 5px;
    border: .7px solid #8a8d93;
}

/* right rail */
.rail {
    width: 17px;
    flex: none;
    display: flex;
    flex-direction: column;
    padding-top: 20.5px;
    background: #f5f6f8;
    border-left: 1px solid #ebecef;
    box-shadow: inset 2px 0 2px -2px rgba(0, 0, 0, .15);
}
.rail-item {
    height: 20.2px;
    display: flex;
    align-items: center;
    justify-content: center;
    color: #6f747c;
}
.rail-item svg {
    width: 8px;
    height: 8px;
    fill: none;
    stroke: #6f747c;
    stroke-width: 1;
}
.rail-faded svg {
    stroke: #a4a7ac;
}
.rail-on {
    height: 15px;
    margin: 2.6px 1px 2.6px -1px;
    background: #fff;
    color: #30353d;
}
.rail-on svg {
    stroke: #30353d;
}
```

FILE: script.js
```js
// moisture readings, as the top edge of each bar in the plot
var tops = [277, 287, 287, 287, 284, 287, 291, 291, 293, 294, 299, 298, 300, 303, 305, 304, 307, 307, 311, 310,
    305, 313, 320, 318, 322, 324, 323, 322, 323, 328, 332, 336, 330, 340, 345, 338, 347, 347, 346, 352, 353, 357,
    362, 364, 362, 372, 373, 378, 378, 382, 387, 395, 397, 400, 407, 416, 416, 418, 421, 428, 440, 440, 453, 460,
    462, 465, 471, 481, 490, 490, 499, 506, 492];

var chart = document.getElementById("moistureChart");

tops.forEach(function (top, i) {
    var y = top / 3 - 82;
    var bar = document.createElementNS("http://www.w3.org/2000/svg", "rect");
    bar.setAttribute("class", "bar");
    bar.setAttribute("x", 20.9 + i * 5.77);
    bar.setAttribute("y", y);
    bar.setAttribute("width", 4.5);
    bar.setAttribute("height", 91.6 - y);
    chart.appendChild(bar);
});
```
